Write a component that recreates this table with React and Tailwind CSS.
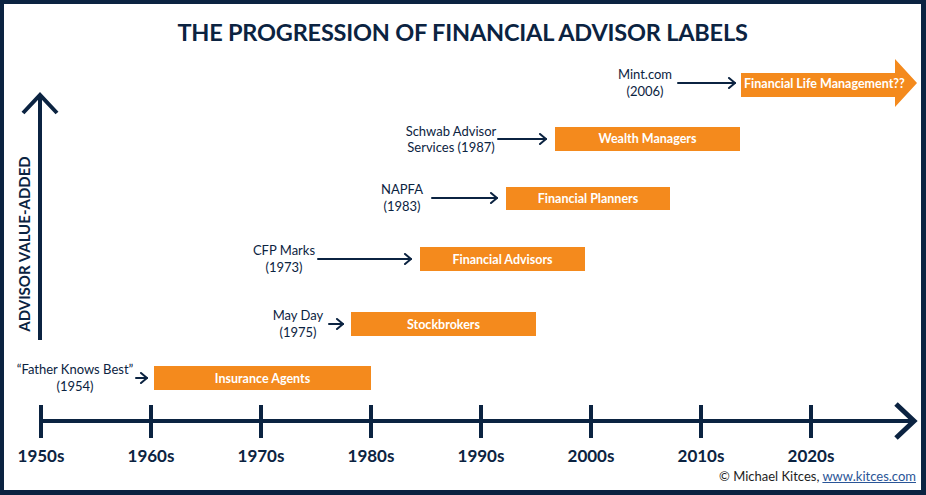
const NAVY = '#0b2341'

function Pointer({ w }) {
  return (
    <svg width={w} height="12" viewBox={`0 0 ${w} 12`} className="shrink-0">
      <g stroke={NAVY} strokeWidth="2" fill="none" strokeLinecap="round" strokeLinejoin="round">
        <line x1="1" y1="6" x2={w - 1} y2="6" />
        <polyline points={`${w - 7},1 ${w - 1},6 ${w - 7},11`} />
      </g>
    </svg>
  )
}

function Bar({ className, children }) {
  return (
    <div className={`bg-[#f48a1d] flex items-center justify-center text-white text-[12.5px] font-bold whitespace-nowrap ${className}`}>
      {children}
    </div>
  )
}

function Axes() {
  const ticks = [41, 151, 261, 371, 481, 591, 701, 811]
  return (
    <svg className="absolute inset-0" width="917" height="440" viewBox="4 50 917 440">
      <g stroke={NAVY} strokeWidth="4" fill="none">
        <line x1="40" y1="96" x2="40" y2="340" />
        <polyline points="23,113 40,95 57,113" />
        <line x1="41" y1="421" x2="913" y2="421" />
        {ticks.map(t => (
          <line key={t} x1={t} y1="405" x2={t} y2="438" />
        ))}
        <polyline points="896,404 914,421 896,438" strokeWidth="5" />
      </g>
    </svg>
  )
}

export default function App() {
  return (
    <div className="w-[926px] h-[495px] bg-[#0b2341] pt-[4px] pl-[4px] pr-[5px] pb-[5px] font-['Lato',sans-serif]">
      <div className="bg-white h-full flex flex-col">
        <h1 className="h-[46px] pt-[15px] text-center text-[23.5px] leading-[26px] font-bold text-[#0b2341] tracking-[-0.2px]">
          THE PROGRESSION OF FINANCIAL ADVISOR LABELS
        </h1>

        <div className="relative flex-1 text-[#0b2341] text-[13px] leading-[17px] whitespace-nowrap">
          <Axes />

          <div className="absolute left-[20px] top-[194px] -translate-x-1/2 -translate-y-1/2 -rotate-90 text-[15px] font-bold">
            ADVISOR VALUE-ADDED
          </div>

          {/* milestones: source -> label */}
          <div className="absolute left-[11px] top-[311px] flex items-center">
            <div className="w-[120px] text-center">
              <p>“Father Knows Best”</p>
              <p>(1954)</p>
            </div>
            <Pointer w={13} />
            <Bar className="ml-[6px] w-[217px] h-[24px]">Insurance Agents</Bar>
          </div>

          <div className="absolute left-[264px] top-[257px] flex items-center">
            <div className="w-[60px] text-center">
              <p>May Day</p>
              <p>(1975)</p>
            </div>
            <Pointer w={16} />
            <Bar className="ml-[7px] w-[185px] h-[24px]">Stockbrokers</Bar>
          </div>

          <div className="absolute left-[247px] top-[192px] flex items-center">
            <div className="w-[66px] text-center">
              <p>CFP Marks</p>
              <p>(1973)</p>
            </div>
            <Pointer w={95} />
            <Bar className="ml-[8px] w-[165px] h-[24px]">Financial Advisors</Bar>
          </div>

          <div className="absolute left-[369px] top-[131px] flex items-center">
            <div className="w-[58px] text-center">
              <p>NAPFA</p>
              <p>(1983)</p>
            </div>
            <Pointer w={67} />
            <Bar className="ml-[8px] w-[164px] h-[23px]">Financial Planners</Bar>
          </div>

          <div className="absolute left-[401px] top-[73px] flex items-center leading-[16px]">
            <div className="w-[92px] text-center">
              <p>Schwab Advisor</p>
              <p>Services (1987)</p>
            </div>
            <Pointer w={50} />
            <Bar className="ml-[8px] w-[185px] h-[24px]">Wealth Managers</Bar>
          </div>

          <div className="absolute left-[609px] top-[9px] flex items-center">
            <div className="w-[64px] text-center">
              <p>Mint.com</p>
              <p>(2006)</p>
            </div>
            <Pointer w={59} />
            <div className="relative ml-[5px] w-[176px] h-[48px] flex items-center">
              <svg className="absolute inset-0" width="176" height="48" viewBox="0 0 176 48">
                <polygon points="0,14 154,14 154,0 176,24 154,48 154,38 0,38" fill="#f48a1d" />
              </svg>
              <span className="relative pl-[3px] text-white text-[12.5px] font-bold">
                Financial Life Management??
              </span>
            </div>
          </div>

          {/* decades */}
          <div className="absolute left-[-18px] top-[397px] flex text-[17px] font-bold">
            {['1950s', '1960s', '1970s', '1980s', '1990s', '2000s', '2010s', '2020s'].map(d => (
              <span key={d} className="w-[110px] text-center">{d}</span>
            ))}
          </div>

          <div className="absolute right-[5px] bottom-[5px] text-[#1d1d1d]">
            © Michael Kitces, <span className="text-[#2a5597] underline">www.kitces.com</span>
          </div>
        </div>
      </div>
    </div>
  )
}
